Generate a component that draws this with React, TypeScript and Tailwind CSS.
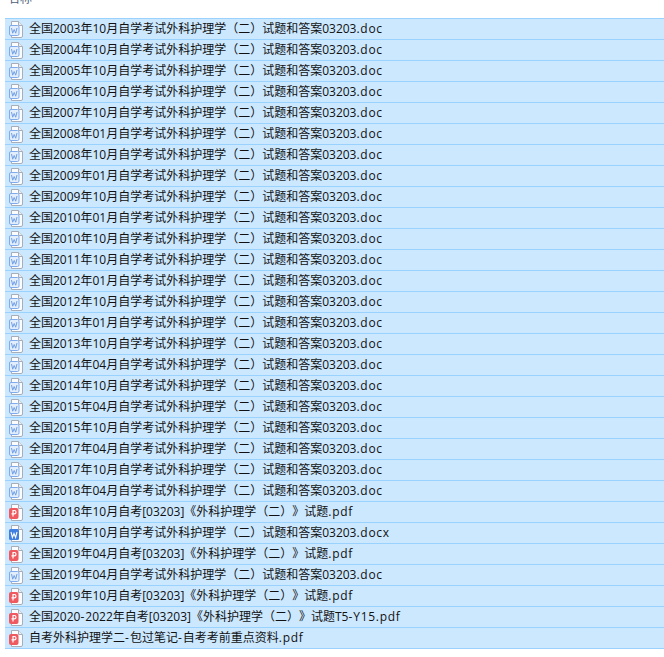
type Kind = 'word' | 'wordx' | 'pdf';

const exam = (date: string) => `全国${date}自学考试外科护理学（二）试题和答案03203.doc`;

const files: { name: string; kind: Kind }[] = [
  ...[
    '2003年10月', '2004年10月', '2005年10月', '2006年10月', '2007年10月', '2008年01月',
    '2008年10月', '2009年01月', '2009年10月', '2010年01月', '2010年10月', '2011年10月',
    '2012年01月', '2012年10月', '2013年01月', '2013年10月', '2014年04月', '2014年10月',
    '2015年04月', '2015年10月', '2017年04月', '2017年10月', '2018年04月',
  ].map((d) => ({ name: exam(d), kind: 'word' as Kind })),
  { name: '全国2018年10月自考[03203]《外科护理学（二）》试题.pdf', kind: 'pdf' },
  { name: '全国2018年10月自学考试外科护理学（二）试题和答案03203.docx', kind: 'wordx' },
  { name: '全国2019年04月自考[03203]《外科护理学（二）》试题.pdf', kind: 'pdf' },
  { name: exam('2019年04月'), kind: 'word' },
  { name: '全国2019年10月自考[03203]《外科护理学（二）》试题.pdf', kind: 'pdf' },
  { name: '全国2020-2022年自考[03203]《外科护理学（二）》试题T5-Y15.pdf', kind: 'pdf' },
  { name: '自考外科护理学二-包过笔记-自考考前重点资料.pdf', kind: 'pdf' },
];

function FileIcon({ kind }: { kind: Kind }) {
  return (
    <svg width="15" height="17" viewBox="0 0 15 17" className="shrink-0">
      <path d="M2.5 .5H9.5L13.5 4.5V15A1.5 1.5 0 0 1 12 16.5H2.5Z" fill="#fbfcfe" stroke="#a8aeb8" />
      <path d="M9.5 .5V4.5H13.5" fill="#e9ecf0" stroke="#a8aeb8" />
      {kind === 'pdf' && (
        <>
          <rect x="0" y="4" width="9.5" height="11" rx="2" fill="#ee5a5f" />
          <path d="M4 12.5V6.5H5.3A1.7 1.7 0 0 1 5.3 9.9H2.5" fill="none" stroke="#fff" strokeWidth="1.2" />
        </>
      )}
      {kind === 'wordx' && (
        <>
          <rect x="0" y="4" width="10" height="11" rx="1.5" fill="#3f7fe0" />
          <path d="M2 7L3.4 12.5L5 8.5L6.6 12.5L8 7" fill="none" stroke="#fff" strokeWidth="1.1" />
        </>
      )}
      {kind === 'word' && (
        <>
          <rect x="0.5" y="4.5" width="9.5" height="10" rx="1.5" fill="#e3eefd" stroke="#7fabec" />
          <path d="M2.5 7L3.7 12.2L5.2 8.5L6.7 12.2L8 7" fill="none" stroke="#6f9fe6" strokeWidth="1" />
        </>
      )}
    </svg>
  );
}

function FileName({ name }: { name: string }) {
  const dot = name.lastIndexOf('.');
  const parts = name.slice(0, dot).split('-');
  return (
    <span className="leading-[20px] [text-spacing-trim:space-all]">
      {parts.map((part, i) => (
        <span key={i}>
          {i > 0 && <span className="tracking-[1px]">-</span>}
          {part.startsWith('Y15') ? <span className="tracking-[0.7px]">{part}</span> : part}
        </span>
      ))}
      <span className="tracking-[0.7px]">{name.slice(dot)}</span>
    </span>
  );
}

export default function App() {
  return (
    <div className="w-[664px] h-[657px] overflow-hidden bg-white font-['Open_Sans','Noto_Sans_CJK_SC',sans-serif] text-[12px] text-[#111]">
      <div className="h-[18px] overflow-hidden pl-[8px] text-[#4c607a]">
        <div className="-mt-[10px] h-[18px] leading-[18px]">名称</div>
      </div>
      <div className="ml-[5px] border-t border-[#99d1ff]">
        {files.map((f, i) => (
          <div
            key={i}
            className="flex h-[21px] items-center gap-[5px] border-b border-[#99d1ff] bg-[#cce8ff] pl-[4px] whitespace-nowrap"
          >
            <FileIcon kind={f.kind} />
            <FileName name={f.name} />
          </div>
        ))}
      </div>
    </div>
  );
}
